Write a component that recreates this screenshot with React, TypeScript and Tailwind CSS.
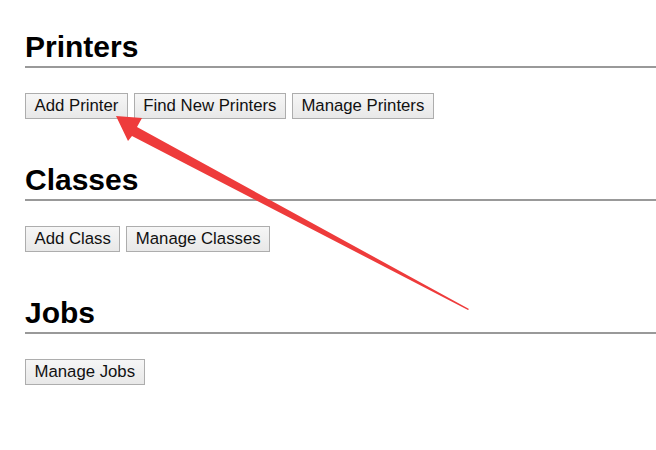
import React from "react";

const SECTIONS: { title: string; buttons: string[] }[] = [
  { title: "Printers", buttons: ["Add Printer", "Find New Printers", "Manage Printers"] },
  { title: "Classes", buttons: ["Add Class", "Manage Classes"] },
  { title: "Jobs", buttons: ["Manage Jobs"] },
];

function Arrow() {
  // tip near the "Add Printer" button, tail off to the lower right
  return (
    <svg className="pointer-events-none absolute left-0 top-0" width="656" height="450" viewBox="0 0 656 450">
      <polygon points="116,116 142,118 137,127 469,309 468,310 132,136 128,141" fill="#ee3b3b" />
    </svg>
  );
}

export default function App() {
  return (
    <div className="relative h-[450px] w-[656px] overflow-hidden bg-white pl-[25px] pt-[30px] font-['Liberation_Sans',Arial,sans-serif] text-black">
      {SECTIONS.map((section) => (
        <section key={section.title} className="mb-[44px]">
          <h2 className="border-b-2 border-[#999999] pb-[2px] text-[30px] font-bold leading-[34px]">{section.title}</h2>
          <div className="mt-[25px] flex gap-[6px]">
            {section.buttons.map((label) => (
              <button
                key={label}
                className="h-[26px] border border-[#adadad] bg-gradient-to-b from-[#f6f6f6] to-[#e8e8e8] px-[8.5px] text-[16.75px] leading-[18px] text-[#111]"
              >
                {label}
              </button>
            ))}
          </div>
        </section>
      ))}
      <Arrow />
    </div>
  );
}
